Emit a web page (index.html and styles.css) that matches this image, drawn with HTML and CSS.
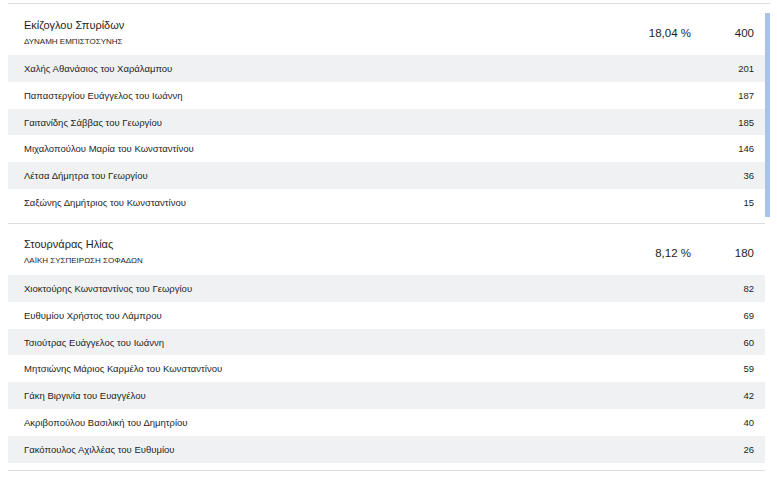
FILE: index.html
```html
<!DOCTYPE html>
<html lang="el">
<head>
  <meta charset="UTF-8">
  <title>Αποτελέσματα</title>
  <link rel="stylesheet" href="styles.css">
</head>
<body>
  <div class="results">
    <div class="scroll-thumb"></div>

    <section class="party">
      <div class="party-head">
        <div class="leader">
          <div class="leader-name">Εκίζογλου Σπυρίδων</div>
          <div class="party-name">ΔΥΝΑΜΗ ΕΜΠΙΣΤΟΣΥΝΗΣ</div>
        </div>
        <div class="pct">18,04 %</div>
        <div class="total">400</div>
      </div>
      <div class="row"><span>Χαλής Αθανάσιος του Χαράλαμπου</span><span>201</span></div>
      <div class="row"><span>Παπαστεργίου Ευάγγελος του Ιωάννη</span><span>187</span></div>
      <div class="row"><span>Γαιτανίδης Σάββας του Γεωργίου</span><span>185</span></div>
      <div class="row"><span>Μιχαλοπούλου Μαρία του Κωνσταντίνου</span><span>146</span></div>
      <div class="row"><span>Λέτσα Δήμητρα του Γεωργίου</span><span>36</span></div>
      <div class="row"><span>Σαξώνης Δημήτριος του Κωνσταντίνου</span><span>15</span></div>
    </section>

    <section class="party">
      <div class="party-head">
        <div class="leader">
          <div class="leader-name">Στουρνάρας Ηλίας</div>
          <div class="party-name">ΛΑΪΚΗ ΣΥΣΠΕΙΡΩΣΗ ΣΟΦΑΔΩΝ</div>
        </div>
        <div class="pct">8,12 %</div>
        <div class="total">180</div>
      </div>
      <div class="row"><span>Χιοκτούρης Κωνσταντίνος του Γεωργίου</span><span>82</span></div>
      <div class="row"><span>Ευθυμίου Χρήστος του Λάμπρου</span><span>69</span></div>
      <div class="row"><span>Τσιούτρας Ευάγγελος του Ιωάννη</span><span>60</span></div>
      <div class="row"><span>Μητσιώνης Μάριος Καρμέλο του Κωνσταντίνου</span><span>59</span></div>
      <div class="row"><span>Γάκη Βιργινία του Ευαγγέλου</span><span>42</span></div>
      <div class="row"><span>Ακριβοπούλου Βασιλική του Δημητρίου</span><span>40</span></div>
      <div class="row"><span>Γακόπουλος Αχιλλέας του Ευθυμίου</span><span>26</span></div>
    </section>
  </div>
</body>
</html>
```

FILE: styles.css
```css
* {
  margin: 0;
  padding: 0;
  box-sizing: border-box;
}

body {
  font-family: 'Liberation Sans', Arial, sans-serif;
  color: #1e1e1e;
  background: #fff;
  padding: 3px 7px 0 8px;
}

.results {
  position: relative;
  border-top: 1px solid #dcdde0;
  padding-right: 5px;
}

.scroll-thumb {
  position: absolute;
  top: 9px;
  right: 0;
  width: 5px;
  height: 204px;
  background: #a9c2e8;
}

.party {
  border-bottom: 1px solid #dcdde0;
  padding-bottom: 7px;
}

.party-head {
  display: flex;
  align-items: center;
  height: 51px;
  padding: 0 11px 0 16px;
}

.leader {
  flex: 1;
}

.leader-name {
  font-size: 11px;
  line-height: 15px;
  margin-top: 5px;
}

.party-name {
  font-size: 8px;
  line-height: 10px;
  margin-top: 4px;
}

.pct {
  font-size: 11.5px;
  margin-top: 7px;
}

.total {
  width: 63px;
  text-align: right;
  font-size: 11.5px;
  margin-top: 7px;
}

.row {
  display: flex;
  justify-content: space-between;
  align-items: center;
  height: 26.83px;
  padding: 0 11px 0 16px;
  font-size: 9.5px;
}

.row:nth-of-type(even) {
  background: #f0f1f3;
}
```
